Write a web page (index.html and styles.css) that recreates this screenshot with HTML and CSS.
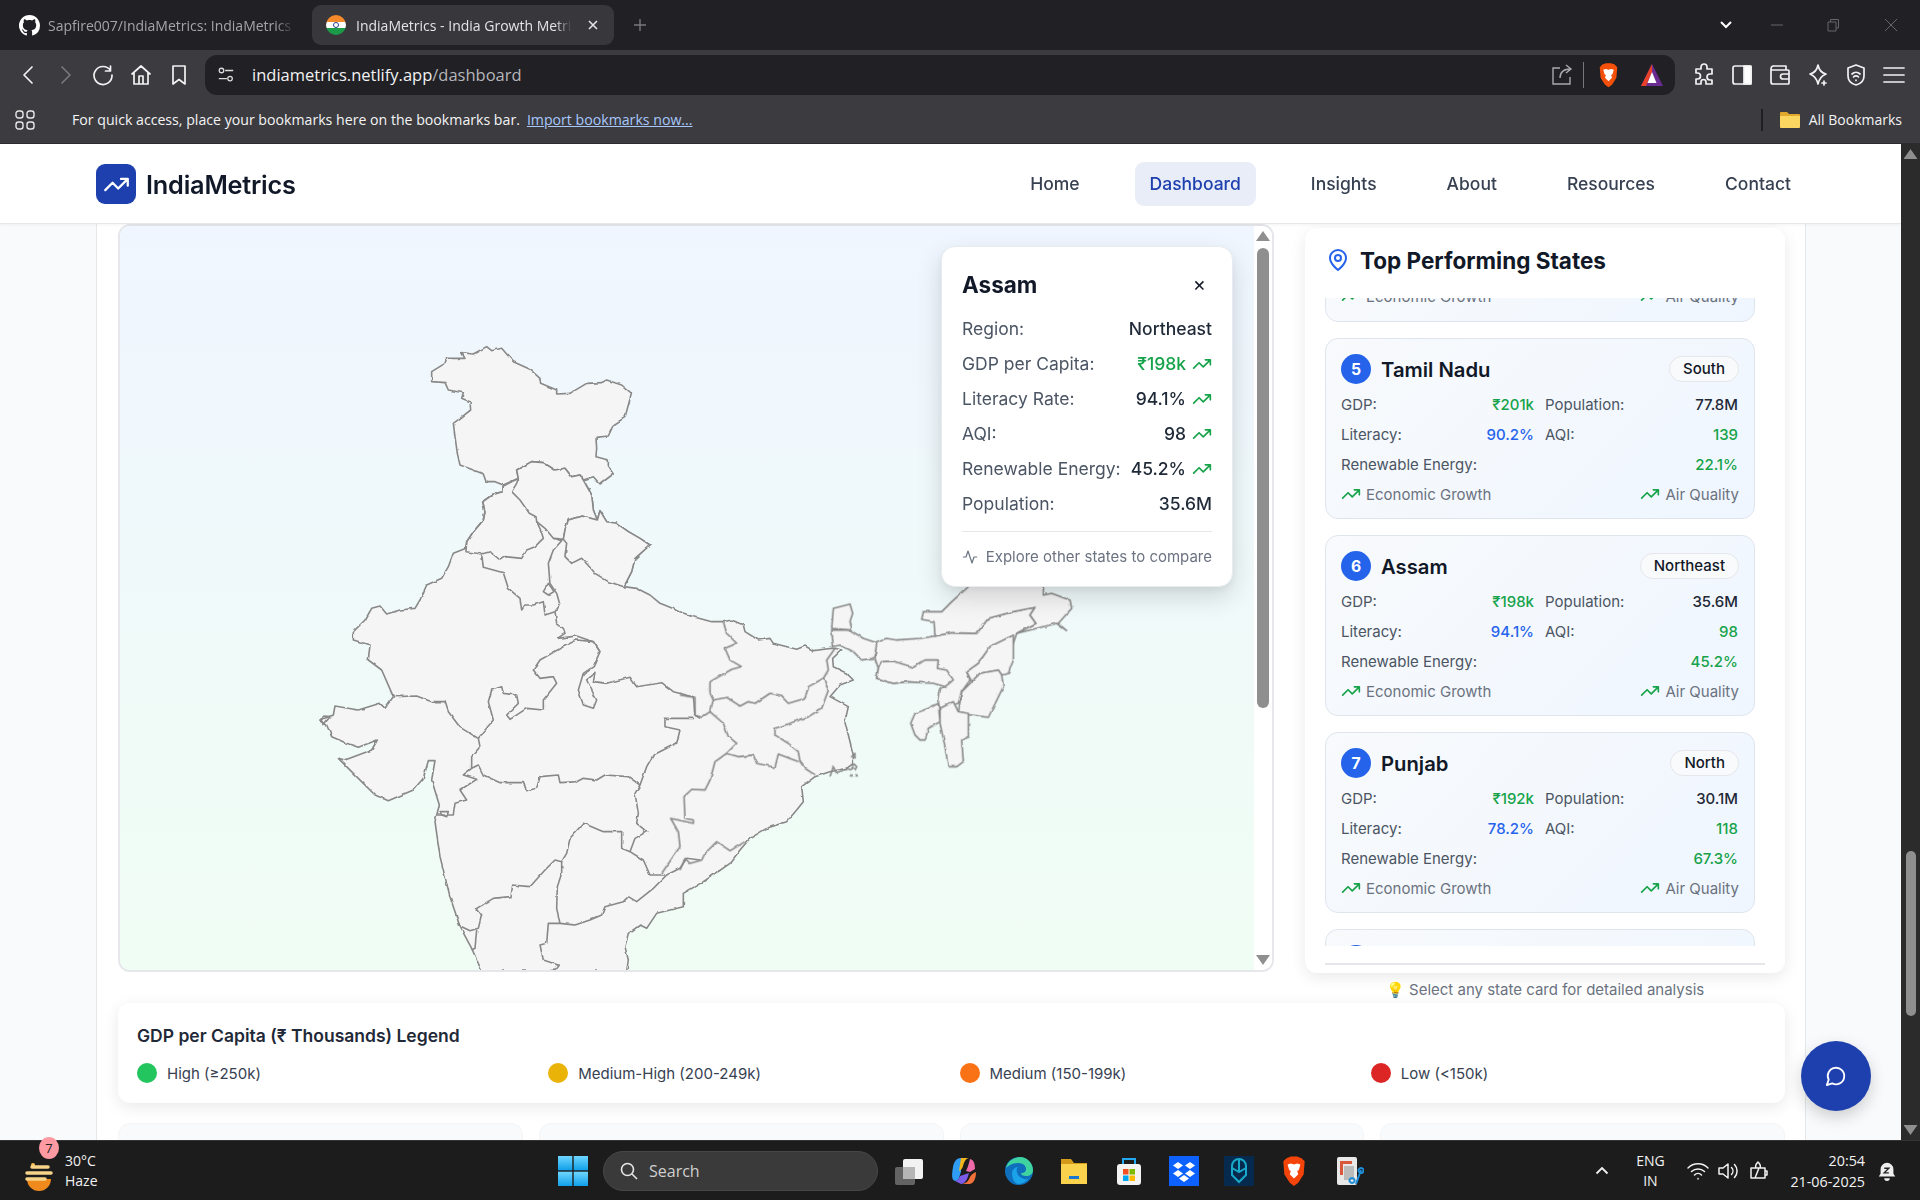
FILE: index.html
```html
<!DOCTYPE html>
<html lang="en">
<head>
<meta charset="utf-8">
<title>IndiaMetrics - India Growth Metrics</title>
<link rel="stylesheet" href="styles.css">
</head>
<body>
<svg class="defs" width="0" height="0" aria-hidden="true">
  <symbol id="trend" viewBox="0 0 24 24"><path d="M22 7l-8.5 8.5-5-5L2 17M16 7h6v6"/></symbol>
  <symbol id="activity" viewBox="0 0 24 24"><path d="M22 12h-4l-3 9L9 3l-3 9H2"/></symbol>
</svg>

<div class="tabbar">
  <div class="tab">
    <svg class="fav" viewBox="0 0 16 16"><path fill="#fff" d="M8 0C3.58 0 0 3.58 0 8c0 3.54 2.29 6.53 5.47 7.59.4.07.55-.17.55-.38 0-.19-.01-.82-.01-1.49-2.01.37-2.53-.49-2.69-.94-.09-.23-.48-.94-.82-1.13-.28-.15-.68-.52-.01-.53.63-.01 1.08.58 1.23.82.72 1.21 1.87.87 2.33.66.07-.52.28-.87.51-1.07-1.78-.2-3.64-.89-3.64-3.95 0-.87.31-1.59.82-2.15-.08-.2-.36-1.02.08-2.12 0 0 .67-.21 2.2.82.64-.18 1.32-.27 2-.27.68 0 1.36.09 2 .27 1.53-1.04 2.2-.82 2.2-.82.44 1.1.16 1.92.08 2.12.51.56.82 1.27.82 2.15 0 3.07-1.87 3.75-3.65 3.95.29.25.54.73.54 1.48 0 1.07-.01 1.93-.01 2.2 0 .21.15.46.55.38A8.013 8.013 0 0016 8c0-4.42-3.58-8-8-8z"/></svg>
    <span class="tab-title muted">Sapfire007/IndiaMetrics: IndiaMetrics</span>
  </div>
  <div class="tab tab-active">
    <span class="flag"><span class="flag-dot"></span></span>
    <span class="tab-title">IndiaMetrics - India Growth Metrics</span>
    <svg class="tab-x" viewBox="0 0 12 12"><path d="M2 2l8 8M10 2l-8 8"/></svg>
  </div>
  <svg class="tab-plus" viewBox="0 0 14 14"><path d="M7 1v12M1 7h12"/></svg>
  <div class="grow"></div>
  <svg class="win-chev" viewBox="0 0 14 10"><path d="M2 2l5 5 5-5"/></svg>
  <svg class="win-btn" viewBox="0 0 14 14"><path d="M1 7h12"/></svg>
  <svg class="win-btn win-restore" viewBox="0 0 14 14"><path d="M2 4h8v9H2zM4.500 4V1.500H12.500V10H10"/></svg>
  <svg class="win-btn" viewBox="0 0 14 14"><path d="M1 1l12 12M13 1L1 13"/></svg>
</div>

<div class="toolbar">
  <svg class="tb-ico tb-back" viewBox="0 0 24 24"><path d="M15 4l-8 8 8 8"/></svg>
  <svg class="tb-ico dim" viewBox="0 0 24 24"><path d="M9 4l8 8-8 8"/></svg>
  <svg class="tb-ico" viewBox="0 0 24 24"><path d="M19.500 7.500A9 9 0 1 0 21 12M19.500 3v5h-5"/></svg>
  <svg class="tb-ico" viewBox="0 0 24 24"><path d="M3 11l9-8 9 8M5 9v12h14V9M10 21v-8h4v8"/></svg>
  <svg class="tb-ico" viewBox="0 0 24 24"><path d="M6 3h12v18l-6-4.500L6 21z"/></svg>
  <div class="urlbar">
    <svg class="url-tune" viewBox="0 0 20 20"><circle cx="5" cy="5" r="2.500"/><path d="M9 5h9M2 14h9"/><circle cx="14.500" cy="14" r="2.500"/></svg>
    <span class="url"><span class="url-host">indiametrics.netlify.app</span>/dashboard</span>
    <div class="grow"></div>
    <svg class="url-share" viewBox="0 0 24 24"><path d="M10 5H3v16h17v-7M10 15c0-6 4-9 11-9M16 2l5 4-5 4"/></svg>
    <span class="url-sep"></span>
    <svg class="brave" viewBox="0 0 24 28"><path fill="#f4500a" d="M5 2l4-1.500h6L19 2l3 3-1 12-5 8-4 3-4-3-5-8L2 5z"/><path fill="#fff" d="M6 8l3-1 3 1 3-1 3 1-1.500 5-1.500 1 1 3-4 4-4-4 1-3-1.500-1z"/></svg>
    <svg class="bat" viewBox="0 0 24 24"><path fill="#6a2c91" d="M12 1L1 23h22z"/><path fill="#e8412a" d="M12 1L1 23h5L12 9z"/><path fill="#fff" d="M12 9l-4.500 11h9z"/></svg>
  </div>
  <svg class="tb-ico" viewBox="0 0 24 24"><path d="M9 4a3 3 0 0 1 6 0v2h5v5h-2a3 3 0 0 0 0 6h2v4h-6v-2a2.500 2.500 0 0 0-5 0v2H4v-5h1.500a3 3 0 0 0 0-6H4V6h5z"/></svg>
  <svg class="tb-ico" viewBox="0 0 24 24"><rect x="3" y="3" width="18" height="18" rx="2"/><rect x="14" y="3" width="7" height="18" fill="#fff"/></svg>
  <svg class="tb-ico" viewBox="0 0 24 24"><path d="M5 3h13v4M3 6a3 3 0 0 1 2-3M3 6v13a2 2 0 0 0 2 2h15a1 1 0 0 0 1-1V8a1 1 0 0 0-1-1H4M21 11h-6a2 2 0 0 0 0 5h6"/></svg>
  <svg class="tb-ico" viewBox="0 0 24 24"><path d="M12 2c1 5 3 8 8 9-5 2-7 5-8 10-1-5-3-8-8-10 5-1 7-4 8-9zM18 18v4M16 20h4"/></svg>
  <svg class="tb-ico" viewBox="0 0 24 24"><path d="M12 2l8 3v8c0 5-4 8-8 9-4-1-8-4-8-9V5zM8 11a6 6 0 0 1 8 0M9.500 14a3.500 3.500 0 0 1 5 0M12 17v.5"/></svg>
  <svg class="tb-ico" viewBox="0 0 24 24"><path d="M2 5h20M2 12h20M2 19h20"/></svg>
</div>

<div class="bookmarks">
  <svg class="bm-apps" viewBox="0 0 20 20"><rect x="1" y="1" width="7" height="7" rx="2.500"/><rect x="12" y="1" width="7" height="7" rx="2.500"/><rect x="1" y="12" width="7" height="7" rx="2.500"/><rect x="12" y="12" width="7" height="7" rx="2.500"/></svg>
  <span class="bm-text">For quick access, place your bookmarks here on the bookmarks bar.</span>
  <span class="bm-link">Import bookmarks now...</span>
  <div class="grow"></div>
  <span class="bm-sep"></span>
  <svg class="bm-folder" viewBox="0 0 20 18"><path fill="#e0a92e" d="M0 2a1 1 0 0 1 1-1h6l2 2h10a1 1 0 0 1 1 1v3H0z"/><path fill="#fbd661" d="M0 5h20v11a1 1 0 0 1-1 1H1a1 1 0 0 1-1-1z"/></svg>
  <span class="bm-all">All Bookmarks</span>
</div>

<div class="viewport">
  <div class="page">
    <header class="nav">
      <div class="brand">
        <span class="logo"><svg class="logo-ico" viewBox="0 0 24 24"><use href="#trend"/></svg></span>
        <span class="brand-name">IndiaMetrics</span>
      </div>
      <nav class="menu">
        <a class="menu-item">Home</a>
        <a class="menu-item menu-active">Dashboard</a>
        <a class="menu-item">Insights</a>
        <a class="menu-item">About</a>
        <a class="menu-item">Resources</a>
        <a class="menu-item">Contact</a>
      </nav>
    </header>

    <main class="main">
      <section class="row">
        <div class="mapbox">
          <div class="map-canvas">
            <svg class="map" viewBox="120 226 1134 744" width="1134" height="744">
              <defs>
                <filter id="rough" filterUnits="userSpaceOnUse" x="120" y="226" width="1134" height="744" color-interpolation-filters="sRGB">
                  <feTurbulence type="fractalNoise" baseFrequency="0.14" numOctaves="1" seed="4"/>
                  <feDisplacementMap in="SourceGraphic" scale="3" xChannelSelector="R" yChannelSelector="G"/>
                </filter>
              </defs>
              <g filter="url(#rough)">
              <g transform="translate(300 640) scale(.33333)">
                <!-- main body, in the coordinates of the west-India trace -->
                <path class="land" d="M498,-275 460,-260 445,-220 425,-185 380,-165 360,-120 345,-95 300,-90 260,-78 240,-102 215,-95 195,-60 160,-25 160,0 210,15 205,60 245,90 280,170 255,205 240,190 175,210 105,198 100,225 60,240 80,255 95,290 140,310 175,322 232,300 215,330 135,360 115,355 190,430 225,465 265,482 340,450 370,415 385,362 405,362 395,420 418,495 410,525 405,545 420,650 450,770 480,860 515,925 545,993 980,993 985,960 975,920 985,880 1020,855 1040,865 1070,820 1150,800 1150,760 1210,725 1240,705 1290,670 1320,630 1350,595 1400,565 1460,545 1490,510 1510,485 1505,440 1545,410 1590,395 1640,385 1660,370 1660,345 1645,285 1635,245 1645,200 1590,170 1620,135 1660,120 1640,100 1600,80 1598,55 1625,30 1605,25 1595,25 1540,32 1515,18 1490,28 1420,10 1410,-5 1375,0 1335,-25 1330,-45 1295,-60 1270,-55 1235,-55 1180,-70 1140,-85 1125,-92 1080,-110 1050,-135 1010,-155 972,-160 995,-205 1005,-245 1050,-285 1020,-305 985,-325 950,-350 920,-355 900,-388 892,-360 880,-390 875,-435 850,-480 650,-510 655,-485 610,-462 608,-445 580,-438 548,-415 555,-385 550,-360 520,-325 500,-295Z"/>
                <!-- north, trace of the top zoom -->
                <g transform="translate(0 -930)">
                  <path class="land" d="M610,465 585,455 558,455 550,432 520,420 480,405 472,370 465,320 460,280 480,265 512,240 510,215 485,205 490,188 445,180 435,158 395,155 395,125 435,100 440,85 495,85 485,68 520,72 560,50 575,62 605,55 640,95 690,118 720,145 722,160 770,180 770,192 810,190 860,160 905,158 920,150 965,165 995,190 985,225 975,262 940,285 925,318 888,322 890,355 888,380 925,390 925,410 940,432 900,462 880,440 850,450 840,435 815,440 795,415 765,420 730,398 695,395 650,420 655,445Z"/>
                  <path class="land" d="M650,420 695,395 730,398 765,420 795,415 815,440 840,435 850,450 875,495 880,540 892,570 845,558 805,570 795,600 790,628 760,625 735,595 710,575 708,560 688,550 660,510 635,485 650,460 655,445Z"/>
                  <path class="land" d="M790,628 795,600 805,570 845,558 892,570 900,542 920,575 950,580 985,605 1020,625 1050,645 1005,685 995,725 972,770 925,755 885,730 875,718 845,685 815,700 795,680 800,640Z"/>
                  <path class="line" d="M610,468 608,485 580,492 548,515 555,545 550,570 520,605 500,635 498,665 545,672 570,665 600,690 615,680 665,685 680,660 705,650 730,625 722,600 710,575"/>
                  <path class="line" d="M545,672 550,712 610,728 625,775 660,805 665,840 675,825 700,825 730,815 735,855 765,845 780,825 770,790 750,760 745,700 760,660 785,632 760,625"/>
                  <path class="line" d="M730,785 745,760 762,785 745,795Z"/>
                  <path class="line" d="M765,845 770,880 790,895 795,910 772,925 830,918 880,935 900,965"/>
                </g>
                <!-- centre and south -->
                <path class="line" d="M280,170 350,168 395,185 435,185 445,215 480,262 535,295 540,320 515,350 515,385 490,405 530,418 480,450 500,480 465,490 460,525 410,525"/>
                <path class="line" d="M535,295 580,240 565,185 575,150 605,140 610,160 650,165 655,190 620,225 630,238 680,205 730,210 730,180 770,130 760,110 720,115 700,90 720,60 790,20 830,0 880,5 900,35 880,80 850,100 835,150 850,195 880,205 890,180 860,120 885,100 880,125 920,130 990,112 1010,140 1085,128 1120,155 1180,170 1185,225 1200,235"/>
                <path class="line" d="M1185,235 1095,235 1095,260 1140,270 1130,310 1060,345 1040,380 1020,435"/>
                <path class="line" d="M515,385 535,375 550,405 600,428 670,428 680,452 710,445 720,410 775,405 780,428 830,425 850,415 890,420 915,405 985,410 1020,435 1005,460 1015,520 1010,550 1040,575 1005,595 990,635 1030,660 1050,705 1095,705"/>
                <path class="line" d="M990,635 965,625 965,575 910,575 850,550 810,595 800,640 785,665 765,660 735,690 690,740 635,735 630,770 580,775 530,805 545,825 535,865 510,872 485,860"/>
                <path class="line" d="M530,870 525,925 515,930"/>
                <path class="line" d="M785,665 785,700 772,740 770,805 780,850 745,850 740,910 720,915 730,960 775,975 765,990 740,993"/>
                <path class="line" d="M780,850 825,855 870,840 905,825 915,800 970,785 985,770 1010,785 1060,745 1100,705 1140,685 1160,655 1200,660"/>
                <path class="line" d="M420,515 445,515 440,530 425,525Z"/>
                <path class="line" d="M60,240 72,228 90,230 70,255 60,240"/>
                <!-- east, trace of the eastern zoom -->
                <g transform="translate(1140 -180)">
                  <path class="line" d="M130,125 140,160 170,190 135,205 150,240 185,260 155,268 90,305 90,340 100,360 140,352 180,378 205,365 225,370 270,340 300,345 325,370 375,355 385,320 430,295 445,330 425,385 385,410 330,430 285,445 285,465 325,490 355,515 360,545 375,565 405,585"/>
                  <path class="line" d="M100,360 90,395 130,430 145,470 170,490 140,520 175,530 220,525 230,550 285,562 295,522 355,545"/>
                  <path class="line" d="M0,345 45,352 45,405 65,412 90,395"/>
                  <path class="line" d="M140,520 105,545 90,600 75,630 35,628 12,650 15,715 40,720 40,730 -28,715 -5,755 0,800 -55,880"/>
                  <path class="line" d="M0,870 15,835 30,850 65,840 75,820 110,785 150,812 195,785"/>
                  <path class="line" d="M465,205 440,240 445,270 430,295"/>
                  <path class="land" d="M455,150 460,200 480,195 520,215 545,240 580,235 595,190 550,175 510,150Z"/>
                  <path class="land" d="M455,145 460,85 510,72 518,100 510,125 515,145 510,150Z"/>
                  <path class="land" d="M590,185 620,175 650,180 720,175 765,168 815,158 890,160 925,115 1000,95 1065,82 1050,105 1068,130 1010,160 1000,190 940,195 900,240 895,255 860,275 870,300 845,335 835,370 780,385 775,370 780,330 795,320 760,305 680,305 640,310 590,295 595,265 585,235Z"/>
                  <path class="land" d="M595,265 605,245 640,243 700,262 735,240 775,240 772,265 800,270 820,300 795,320 760,310 680,305 640,310 590,295Z"/>
                  <path class="land" d="M765,168 762,125 725,118 730,95 785,95 815,65 860,25 900,-20 1090,-20 1090,45 1115,40 1170,60 1175,85 1135,130 1160,152 1130,130 1070,145 1010,160 1068,130 1050,105 1065,82 1000,95 925,115 890,160 815,158Z"/>
                  <path class="land" d="M1000,190 1000,240 985,280 965,285 955,270 900,280 875,305 860,275 895,250 930,200 1000,165Z"/>
                  <path class="land" d="M900,280 955,270 965,285 970,320 925,412 870,405 835,395 845,335 875,305Z"/>
                  <path class="land" d="M780,385 820,365 835,395 865,400 865,470 845,480 850,545 830,560 805,560 795,500 780,430Z"/>
                  <path class="land" d="M775,370 780,425 745,445 735,480 720,480 705,465 692,430 705,400 745,385Z"/>
                  <path class="line" d="M450,590 460,560 470,580 500,565 515,570 520,550 530,560 525,570 515,560 M515,530 525,520 525,535Z"/>
                  <path class="tiny" d="M508,590 513,580 517,590ZM525,590 530,580 535,590Z"/>
                </g>
              </g>
              </g>
            </svg>

            <aside class="pop">
              <div class="pop-head">
                <h3 class="pop-title">Assam</h3>
                <span class="pop-close">×</span>
              </div>
              <div class="pop-row"><span>Region:</span><span class="pop-val">Northeast</span></div>
              <div class="pop-row"><span>GDP per Capita:</span><span class="pop-val green">₹198k<svg class="pop-trend"><use href="#trend"/></svg></span></div>
              <div class="pop-row"><span>Literacy Rate:</span><span class="pop-val">94.1%<svg class="pop-trend"><use href="#trend"/></svg></span></div>
              <div class="pop-row"><span>AQI:</span><span class="pop-val">98<svg class="pop-trend"><use href="#trend"/></svg></span></div>
              <div class="pop-row"><span>Renewable Energy:</span><span class="pop-val">45.2%<svg class="pop-trend"><use href="#trend"/></svg></span></div>
              <div class="pop-row"><span>Population:</span><span class="pop-val">35.6M</span></div>
              <div class="pop-foot"><svg class="pop-act"><use href="#activity"/></svg><span>Explore other states to compare</span></div>
            </aside>
          </div>
          <div class="map-scroll">
            <span class="arrow arrow-up"></span>
            <span class="map-thumb"></span>
            <span class="arrow arrow-down arrow-end"></span>
          </div>
        </div>

        <div class="side">
          <div class="panel">
            <div class="panel-head">
              <svg class="pin" viewBox="0 0 24 24"><path d="M20 10c0 6-8 12-8 12s-8-6-8-12a8 8 0 0 1 16 0Z"/><circle cx="12" cy="10" r="3"/></svg>
              <h2 class="panel-title">Top Performing States</h2>
            </div>
            <div class="list">
              <article class="card card-clip">
                <div class="card-foot"><span class="foot-item"><svg class="ti"><use href="#trend"/></svg>Economic Growth</span><span class="foot-item"><svg class="ti"><use href="#trend"/></svg>Air Quality</span></div>
              </article>

              <article class="card">
                <div class="card-head"><span class="rank">5</span><span class="state">Tamil Nadu</span><span class="badge">South</span></div>
                <div class="stats">
                  <span class="stat"><span>GDP:</span><b class="v-green">₹201k</b></span><span class="stat"><span>Population:</span><b>77.8M</b></span>
                  <span class="stat"><span>Literacy:</span><b class="v-blue">90.2%</b></span><span class="stat"><span>AQI:</span><b class="v-green">139</b></span>
                  <span class="stat stat-wide"><span>Renewable Energy:</span><b class="v-green">22.1%</b></span>
                </div>
                <div class="card-foot"><span class="foot-item"><svg class="ti"><use href="#trend"/></svg>Economic Growth</span><span class="foot-item"><svg class="ti"><use href="#trend"/></svg>Air Quality</span></div>
              </article>

              <article class="card">
                <div class="card-head"><span class="rank">6</span><span class="state">Assam</span><span class="badge">Northeast</span></div>
                <div class="stats">
                  <span class="stat"><span>GDP:</span><b class="v-green">₹198k</b></span><span class="stat"><span>Population:</span><b>35.6M</b></span>
                  <span class="stat"><span>Literacy:</span><b class="v-blue">94.1%</b></span><span class="stat"><span>AQI:</span><b class="v-green">98</b></span>
                  <span class="stat stat-wide"><span>Renewable Energy:</span><b class="v-green">45.2%</b></span>
                </div>
                <div class="card-foot"><span class="foot-item"><svg class="ti"><use href="#trend"/></svg>Economic Growth</span><span class="foot-item"><svg class="ti"><use href="#trend"/></svg>Air Quality</span></div>
              </article>

              <article class="card">
                <div class="card-head"><span class="rank">7</span><span class="state">Punjab</span><span class="badge">North</span></div>
                <div class="stats">
                  <span class="stat"><span>GDP:</span><b class="v-green">₹192k</b></span><span class="stat"><span>Population:</span><b>30.1M</b></span>
                  <span class="stat"><span>Literacy:</span><b class="v-blue">78.2%</b></span><span class="stat"><span>AQI:</span><b class="v-green">118</b></span>
                  <span class="stat stat-wide"><span>Renewable Energy:</span><b class="v-green">67.3%</b></span>
                </div>
                <div class="card-foot"><span class="foot-item"><svg class="ti"><use href="#trend"/></svg>Economic Growth</span><span class="foot-item"><svg class="ti"><use href="#trend"/></svg>Air Quality</span></div>
              </article>

              <article class="card">
                <div class="card-head"><span class="rank"></span><span class="state"></span><span class="badge badge-empty"></span></div>
              </article>
            </div>
            <div class="panel-foot"></div>
          </div>
          <p class="hint">💡 Select any state card for detailed analysis</p>
        </div>
      </section>

      <section class="legend">
        <h4 class="legend-title">GDP per Capita (₹ Thousands) Legend</h4>
        <div class="legend-grid">
          <span class="legend-item"><i class="dot dot-high"></i>High (≥250k)</span>
          <span class="legend-item"><i class="dot dot-mh"></i>Medium-High (200-249k)</span>
          <span class="legend-item"><i class="dot dot-med"></i>Medium (150-199k)</span>
          <span class="legend-item"><i class="dot dot-low"></i>Low (&lt;150k)</span>
        </div>
      </section>

      <section class="tiles">
        <div class="tile"></div><div class="tile"></div><div class="tile"></div><div class="tile"></div>
      </section>
    </main>

    <button class="fab" aria-label="Chat"><svg viewBox="0 0 24 24"><path d="M7.900 20A9 9 0 1 0 4 16.100L2 22Z"/></svg></button>
  </div>
  <div class="pagebar">
    <span class="arrow arrow-up"></span>
    <span class="page-thumb"></span>
    <span class="arrow arrow-down arrow-end"></span>
  </div>
</div>

<footer class="taskbar">
  <div class="weather">
    <svg class="w-ico" viewBox="0 0 30 34"><circle cx="9" cy="8" r="2" fill="#f6c453"/><path fill="#f08a1d" d="M3 22h24a12 12 0 0 1-24 0z"/><path stroke="#f6d488" stroke-width="3.500" stroke-linecap="round" d="M8 10h16M3 16h24M3 22h18"/></svg>
    <span class="w-badge">7</span>
    <div class="w-text"><span>30°C</span><span>Haze</span></div>
  </div>
  <div class="task-center">
    <svg class="t-win" viewBox="0 0 30 30"><defs><linearGradient id="wg" x1="0" y1="0" x2="0" y2="1"><stop offset="0" stop-color="#6fd6ff"/><stop offset="1" stop-color="#0f9fea"/></linearGradient></defs><rect width="14.300" height="14.300" fill="url(#wg)"/><rect x="15.700" width="14.300" height="14.300" fill="url(#wg)"/><rect y="15.700" width="14.300" height="14.300" fill="url(#wg)"/><rect x="15.700" y="15.700" width="14.300" height="14.300" fill="url(#wg)"/></svg>
    <div class="t-search">
      <svg viewBox="0 0 20 20"><circle cx="8.500" cy="8.500" r="6"/><path d="M13 13l5 5"/></svg>
      <span>Search</span>
    </div>
    <div class="t-icons">
      <svg class="t-app" viewBox="0 0 30 30"><rect x="9" y="3" width="20" height="20" rx="2" fill="#f2f2f2"/><rect x="1" y="11" width="20" height="18" rx="2" fill="#6b6b6b" opacity=".9"/><rect x="9" y="11" width="12" height="12" fill="#b5b5b5"/></svg>
      <svg class="t-app" viewBox="0 0 30 30"><path fill="#2f9df4" d="M12 2c-5 0-7 4-8 9-1 6-2 13 2 14 4 0 4-4 6-9z"/><path fill="#f1b51c" d="M12 2h8c-3 0-5 4-6 8-1 3-2 4-4 5z"/><path fill="#ef6aa8" d="M21 3c4 1 5 5 5 10l-5 3-4-1c2-4 3-8 4-12z"/><path fill="#f2703a" d="M12 28c4 0 7-2 9-7 1-2 3-4 6-5 0 6-2 12-7 12z"/><path fill="#7a5ce6" d="M6 25c3 0 4-3 5-5l9-3c-1 4-3 11-8 11z"/></svg>
      <svg class="t-app" viewBox="0 0 30 30"><circle cx="15" cy="15" r="14" fill="#0f6fbd"/><path fill="#3fd3a0" d="M2 12C4 4 11 1 16 1c7 0 13 6 13 13 0 4-3 6-7 6-3 0-5-1-5-3 4 0 5-2 5-4 0-4-4-6-8-6-6 0-10 3-12 5z"/><path fill="#1aa3e8" d="M8 17c0-3 3-6 6-6-3 3-1 10 6 12 2 1 4 0 5-1-3 4-7 6-11 6-4-1-6-6-6-11z"/></svg>
      <svg class="t-app" viewBox="0 0 30 30"><path fill="#d49a1a" d="M2 3h10l3 4h13v5H2z"/><path fill="#fad24c" d="M2 8h26v20H2z"/><rect x="10" y="20" width="10" height="3" fill="#1976d2"/></svg>
      <svg class="t-app" viewBox="0 0 30 30"><path fill="none" stroke="#23a9f2" stroke-width="2" d="M9 9V3h12v6"/><rect x="3" y="8" width="24" height="21" rx="3" fill="#f3f3f3"/><rect x="9" y="13" width="5.500" height="5.500" fill="#f25022"/><rect x="15.500" y="13" width="5.500" height="5.500" fill="#7fba00"/><rect x="9" y="19.500" width="5.500" height="5.500" fill="#00a4ef"/><rect x="15.500" y="19.500" width="5.500" height="5.500" fill="#ffb900"/></svg>
      <svg class="t-app" viewBox="0 0 30 30"><rect width="30" height="30" fill="#0d61ff"/><path fill="#fff" d="M9 6l5 3.500L9 13 4 9.500zM21 6l5 3.500-5 3.500-5-3.500zM9 14l5 3.500-5 3.500-5-3.500zM21 14l5 3.500-5 3.500-5-3.500zM15 19l5 3.500-5 3.500-5-3.500z"/></svg>
      <svg class="t-app" viewBox="0 0 30 30"><rect width="30" height="30" fill="#062a4d"/><path fill="none" stroke="#18a8c9" stroke-width="2" d="M8 10a7 7 0 0 1 14 0v9l-7 7-7-7zM15 3v12M8 12l7 4 7-4"/></svg>
      <svg class="t-app" viewBox="0 0 24 28"><path fill="#f4440a" d="M5 2l4-1.500h6L19 2l3 3-1 12-5 8-4 3-4-3-5-8L2 5z"/><path fill="#fff" d="M6 8l3-1 3 1 3-1 3 1-1.500 5-1.500 1 1 3-4 4-4-4 1-3-1.500-1z"/></svg>
      <svg class="t-app" viewBox="0 0 30 30"><rect x="3" y="1" width="20" height="28" rx="2" fill="#e8e8e8"/><rect x="6" y="5" width="3" height="14" fill="#d9583b"/><rect x="9" y="5" width="9" height="3" fill="#d9583b"/><path fill="#bbb" d="M10 10h10v14H10z"/><path fill="none" stroke="#1f8ed8" stroke-width="2" d="M27 14l-5 14M18 22a2.500 2.500 0 1 0 .1 0zM27 12a2.500 2.500 0 1 0 .1 0z"/></svg>
    </div>
  </div>
  <div class="tray">
    <svg class="tr-caret" viewBox="0 0 14 9"><path d="M1.500 7.500L7 2l5.500 5.500"/></svg>
    <div class="tr-lang"><span>ENG</span><span>IN</span></div>
    <svg class="tr-ico" viewBox="0 0 24 24"><path d="M2 9a14 14 0 0 1 20 0M5.500 12.500a9.500 9.500 0 0 1 13 0M8.500 16a5 5 0 0 1 7 0M12 19.500v.5"/></svg>
    <svg class="tr-ico" viewBox="0 0 24 24"><path d="M3 9v6h4l5 4V5L7 9zM15.500 8.500a5 5 0 0 1 0 7M18.500 5.500a9.500 9.500 0 0 1 0 13"/></svg>
    <svg class="tr-ico" viewBox="0 0 24 24"><path d="M5 9h14v10H5zM19 12h2v4h-2M9 19l4-10M12 3c2 2 3 4 2 6h-4c-1-2 0-4 2-6z"/></svg>
    <div class="tr-time"><span>20:54</span><span>21-06-2025</span></div>
    <svg class="tr-bell" viewBox="0 0 24 24"><path fill="#eee" d="M12 3a7 7 0 0 0-7 7v5l-2 3h18l-2-3v-5a7 7 0 0 0-7-7zM9 20a3 3 0 0 0 6 0z"/><path fill="none" stroke="#222" stroke-width="1.500" d="M9 9h5l-5 5h5"/></svg>
  </div>
</footer>
</body>
</html>
```

FILE: styles.css
```css
* { box-sizing: border-box; }
html, body { margin: 0; padding: 0; }
body {
  width: 1920px; height: 1200px; overflow: hidden;
  display: flex; flex-direction: column;
  font-family: "Inter", "Noto Sans", sans-serif;
  background: #202025;
}
.defs { position: absolute; }
.grow { flex: 1; }
svg { display: block; flex: none; }
h2, h3, h4, p { margin: 0; }

/* browser chrome */
.tabbar {
  height: 50px; flex: none; background: #202025;
  display: flex; align-items: center;
  font-family: "Open Sans", "Noto Sans", sans-serif; font-size: 14px; color: #e4e4e6;
}
.tab { display: flex; align-items: center; height: 40px; width: 302px; padding-left: 19px; }
.tab:first-child { width: 312px; }
.tab-active { background: #37373c; border-radius: 9px; padding-left: 14px; }
.fav { width: 21px; height: 21px; margin-right: 8px; }
.flag { width: 20px; height: 20px; border-radius: 50%; margin-right: 10px; display: flex; align-items: center; justify-content: center;
  background: linear-gradient(#f58a2a 0 34%, #fff 34% 66%, #1b9a47 66%); }
.flag-dot { width: 6px; height: 6px; border: 1px solid #2c3e8f; border-radius: 50%; }
.tab-title { width: 216px; white-space: nowrap; overflow: hidden;
  -webkit-mask-image: linear-gradient(90deg, #000 92%, transparent); mask-image: linear-gradient(90deg, #000 92%, transparent); }
.tab:first-child .tab-title { width: 247px; }
.muted { color: #a5a5a9; }
.tab-x { width: 12px; height: 12px; margin-left: 15px; fill: none; stroke: #e4e4e6; stroke-width: 1.600; }
.tab-plus { width: 14px; height: 14px; margin-left: 19px; fill: none; stroke: #77777c; stroke-width: 1.400; }
.win-chev { width: 14px; height: 10px; fill: none; stroke: #fff; stroke-width: 2; margin-right: 37px; }
.win-btn { width: 14px; height: 14px; fill: none; stroke: #66666b; stroke-width: 1; margin-right: 42px; }
.win-restore { margin-right: 44px; }
.win-btn:last-child { margin-right: 22px; }

.toolbar {
  height: 50px; flex: none; background: #3b3b40;
  display: flex; align-items: center; padding-left: 15px;
  font-family: "Open Sans", "Noto Sans", sans-serif;
}
.tb-ico { width: 24px; height: 24px; margin-right: 14px; fill: none; stroke: #f2f2f2; stroke-width: 1.700; stroke-linejoin: round; stroke-linecap: round; }
.tb-back { margin-left: 2px; margin-right: 12px; }
.dim { stroke: #77777c; }
.urlbar {
  width: 1470px; height: 40px; background: #202025; border-radius: 12px; margin-right: 17px;
  display: flex; align-items: center; padding: 0 11px 0 12px; font-size: 16.500px; color: #b6b6ba;
}
.url-tune { width: 18px; height: 18px; fill: none; stroke: #dcdcdc; stroke-width: 1.400; margin-right: 17px; }
.url { margin-top: -2px; }
.url-host { color: #f2f2f2; }
.url-share { width: 24px; height: 26px; fill: none; stroke: #a9a9ad; stroke-width: 1.400; }
.url-sep { width: 1px; height: 26px; background: #77777c; margin: 0 14px 0 9px; }
.brave { width: 21px; height: 30px; margin-right: 21px; }
.bat { width: 24px; height: 24px; }

.bookmarks {
  height: 44px; flex: none; background: #3b3b40; border-bottom: 1px solid #2b2b2f;
  display: flex; align-items: center; padding: 0 18px 4px 15px;
  font-family: "Open Sans", "Noto Sans", sans-serif; font-size: 14.150px; color: #f4f4f4;
}
.bm-apps { width: 20px; height: 20px; fill: none; stroke: #e8e8e8; stroke-width: 1.400; margin-right: 37px; }
.bm-link { color: #a8c7fa; text-decoration: underline; margin-left: 7px; }
.bm-sep { width: 2px; height: 22px; background: #1f1f22; margin-right: 17px; }
.bm-folder { width: 20px; height: 18px; margin-right: 9px; }
.bm-all { font-size: 14px; }

/* page */
.viewport { height: 996px; flex: none; display: flex; }
.page { flex: 1; position: relative; overflow: hidden; background: #f8fafc; }
.pagebar { width: 19px; background: #2b2b2b; display: flex; flex-direction: column; align-items: center; padding: 5px 0; }
.arrow { width: 14px; height: 10px; background: #8f8f8f; flex: none; }
.arrow-up { clip-path: polygon(50% 0, 100% 100%, 0 100%); }
.arrow-down { clip-path: polygon(0 0, 100% 0, 50% 100%); }
.arrow-end { margin-top: auto; }
.page-thumb { width: 10px; height: 165px; margin-top: 692px; background: #8f8f8f; border-radius: 5px; flex: none; }

.nav {
  height: 80px; background: #fff; border-bottom: 1px solid #e5e7eb; box-shadow: 0 1px 3px rgba(0,0,0,.05);
  display: flex; align-items: center; justify-content: space-between;
  padding: 1px 95px 0 96px; position: relative; z-index: 2;
}
.brand { display: flex; align-items: center; gap: 10px; }
.logo { width: 40px; height: 40px; border-radius: 9px; background: #1e40af; display: flex; align-items: center; justify-content: center; }
.logo-ico { width: 27px; height: 27px; fill: none; stroke: #fff; stroke-width: 2; stroke-linecap: round; stroke-linejoin: round; }
.brand-name { font-size: 25.300px; font-weight: 600; color: #111827; letter-spacing: -.2px; }
.menu { display: flex; gap: 40px; }
.menu-item { padding: 0 15px; height: 44px; line-height: 44px; border-radius: 9px; font-size: 17.500px; font-weight: 500; color: #374151; }
.menu-active { background: #e8edf7; color: #1e40af; }

.main {
  width: 1710px; margin-left: 96px; background: #fff;
  border-left: 1px solid #e5e7eb; border-right: 1px solid #e5e7eb;
  padding: 0 20px 0 21px; height: 916px;
}
.row { display: flex; gap: 31px; align-items: flex-start; }

.mapbox { width: 1156px; height: 748px; flex: none; border: 2px solid #e5e7eb; border-radius: 12px; overflow: hidden; display: flex; background: #fff; }
.map-canvas { flex: 1; position: relative; background: linear-gradient(#eff6ff, #f0fdf4); overflow: hidden; }
.map { position: absolute; left: 0; top: 0; }
.land { fill: #f5f5f5; stroke: #888; stroke-width: 1.600; stroke-linejoin: round; vector-effect: non-scaling-stroke; }
.line { fill: none; stroke: #888; stroke-width: 1.600; stroke-linejoin: round; vector-effect: non-scaling-stroke; }
.tiny { fill: #888; }
.map-scroll { width: 18px; flex: none; display: flex; flex-direction: column; align-items: center; padding: 5px 0; background: #fff; }
.map-thumb { width: 12px; height: 460px; margin-top: 7px; border-radius: 6px; background: #8f8f8f; flex: none; }

.pop {
  position: absolute; left: 821px; top: 20px; width: 292px; height: 341px;
  background: #fff; border: 1px solid #e8ebf0; border-radius: 14px;
  box-shadow: 0 10px 26px rgba(0,0,0,.14), 0 3px 8px rgba(0,0,0,.05);
  padding: 18px 20px 0; font-size: 17.500px; color: #4b5563;
}
.pop-head { display: flex; align-items: center; justify-content: space-between; height: 38px; margin-bottom: 8px; padding-right: 6px; }
.pop-title { font-size: 22.500px; font-weight: 700; color: #111827; }
.pop-close { font-size: 20px; color: #111827; line-height: 1; }
.pop-row { display: flex; justify-content: space-between; align-items: center; height: 35px; white-space: nowrap; }
.pop-val { display: flex; align-items: center; gap: 6px; color: #1f2937; font-weight: 500; }
.pop-val.green { color: #16a34a; }
.pop-trend { width: 20px; height: 20px; fill: none; stroke: #16a34a; stroke-width: 2; stroke-linecap: round; stroke-linejoin: round; }
.pop-foot { margin-top: 10px; border-top: 1px solid #e5e7eb; padding-top: 15px; display: flex; align-items: center; justify-content: space-between; font-size: 15px; color: #6b7280; white-space: nowrap; }
.pop-act { width: 16px; height: 16px; fill: none; stroke: #6b7280; stroke-width: 1.800; stroke-linejoin: round; stroke-linecap: round; }

.side { width: 480px; flex: none; padding-top: 4px; }
.panel { height: 745px; background: #fff; border-radius: 12px; box-shadow: 0 4px 16px rgba(0,0,0,.09); display: flex; flex-direction: column; }
.panel-head { height: 70px; flex: none; display: flex; align-items: center; padding: 0 0 6px 21px; gap: 10px; }
.pin { width: 24px; height: 24px; fill: none; stroke: #2563eb; stroke-width: 2; }
.panel-title { font-size: 22.500px; font-weight: 700; color: #111827; }
.list { height: 648px; flex: none; overflow: hidden; padding: 0 30px 0 20px; display: flex; flex-direction: column; gap: 16px; }
.panel-foot { margin: 17px 20px 0; border-top: 2px solid #e5e7eb; }

.card {
  height: 181px; flex: none; border: 1px solid #dfe5ee; border-radius: 13px; padding: 15px 15px 9px;
  background: linear-gradient(135deg, #f8fafc, #eff6ff);
  font-size: 15px; color: #4b5563;
}
.card-clip { height: 50px; margin-top: -26px; padding-top: 8px; }
.card-head { display: flex; align-items: center; height: 30px; margin-bottom: 5px; }
.rank { width: 30px; height: 30px; border-radius: 50%; background: #2563eb; color: #fff; font-size: 15.750px; font-weight: 700; display: flex; align-items: center; justify-content: center; margin-right: 10px; }
.state { font-size: 20.250px; font-weight: 600; color: #111827; flex: 1; }
.badge { height: 26px; line-height: 24px; border: 1px solid #e5e7eb; border-radius: 13px; background: #f9fafb; padding: 0 13px; font-size: 15px; font-weight: 500; color: #111827; }
.badge-empty { width: 70px; }
.stats { display: grid; grid-template-columns: 193px 193px; column-gap: 11px; }
.stat { display: flex; justify-content: space-between; align-items: center; height: 30px; }
.stat b { font-weight: 500; color: #1f2937; }
.stat b.v-green { color: #16a34a; }
.stat b.v-blue { color: #2563eb; }
.stat-wide { grid-column: 1 / 3; }
.card-foot { display: flex; justify-content: space-between; height: 30px; color: #6b7280; }
.foot-item { display: flex; align-items: center; gap: 5px; }
.ti { width: 20px; height: 20px; fill: none; stroke: #16a34a; stroke-width: 2; stroke-linecap: round; stroke-linejoin: round; }

.hint { margin-top: 7px; margin-bottom: 4px; height: 19px; line-height: 19px; text-align: center; font-size: 15px; color: #6b7280; }

.legend { height: 100px; background: #fff; border-radius: 12px; box-shadow: 0 4px 16px rgba(0,0,0,.09); padding: 22px 19px 0; }
.legend-title { font-size: 17.500px; font-weight: 600; color: #1f2937; line-height: 22px; }
.legend-grid { display: grid; grid-template-columns: repeat(4, 1fr); gap: 16px; margin-top: 16px; }
.legend-item { display: flex; align-items: center; gap: 10px; font-size: 15px; color: #374151; height: 20px; }
.dot { width: 20px; height: 20px; border-radius: 50%; flex: none; }
.dot-high { background: #22c55e; }
.dot-mh { background: #eab308; }
.dot-med { background: #f97316; }
.dot-low { background: #dc2626; }

.tiles { display: grid; grid-template-columns: repeat(4, 1fr); gap: 16px; margin-top: 20px; }
.tile { height: 80px; background: #f9fafb; border: 1px solid #f3f4f6; border-radius: 12px; }

.fab { position: absolute; left: 1801px; top: 897px; width: 70px; height: 70px; border: 0; padding: 0; border-radius: 50%; background: #1e40af; display: flex; align-items: center; justify-content: center; box-shadow: 0 6px 16px rgba(0,0,0,.18); z-index: 3; }
.fab svg { width: 22px; height: 22px; fill: none; stroke: #fff; stroke-width: 2; stroke-linejoin: round; }

/* taskbar */
.taskbar {
  height: 60px; flex: none; background: #1c1c1c; border-top: 1px solid #333;
  display: flex; align-items: center;
  font-family: "Open Sans", "Noto Sans", sans-serif; color: #f2f2f2; font-size: 14px;
}
.weather { width: 558px; flex: none; display: flex; align-items: center; padding-left: 24px; position: relative; }
.w-ico { width: 30px; height: 34px; fill: none; margin-right: 11px; margin-top: 6px; }
.w-badge { position: absolute; left: 39px; top: -14px; width: 20px; height: 22px; border-radius: 50%; background: #ff9aa2; color: #222; font-size: 13px; text-align: center; line-height: 22px; }
.w-text { display: flex; flex-direction: column; line-height: 20px; font-size: 14px; }
.task-center { display: flex; align-items: center; }
.t-win { width: 30px; height: 30px; margin-right: 15px; }
.t-search { width: 275px; height: 40px; border-radius: 20px; background: #3a3a3a; border: 1px solid #474747; display: flex; align-items: center; padding-left: 15px; gap: 10px; font-size: 16px; color: #cfcfcf; }
.t-search svg { width: 20px; height: 20px; fill: none; stroke: #e6e6e6; stroke-width: 1.600; }
.t-icons { display: flex; gap: 25px; margin-left: 16px; }
.t-app { width: 30px; height: 30px; }
.tray { margin-left: auto; display: flex; align-items: center; padding-right: 22px; }
.tr-caret { width: 14px; height: 9px; fill: none; stroke: #f2f2f2; stroke-width: 1.800; margin-right: 26px; }
.tr-lang { display: flex; flex-direction: column; align-items: center; line-height: 20px; width: 30px; margin-right: 21px; }
.tr-ico { width: 24px; height: 24px; fill: none; stroke: #f2f2f2; stroke-width: 1.500; margin-right: 6px; stroke-linecap: round; stroke-linejoin: round; }
.tr-time { display: flex; flex-direction: column; align-items: flex-end; line-height: 21px; font-size: 14.300px; margin-left: 14px; margin-right: 11px; }
.tr-bell { width: 22px; height: 24px; }
```
